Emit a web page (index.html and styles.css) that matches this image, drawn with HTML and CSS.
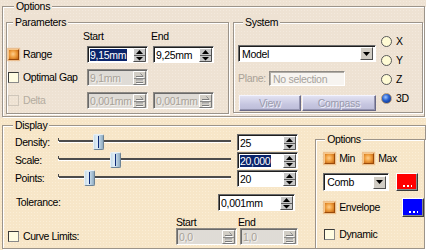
FILE: index.html
```html
<!DOCTYPE html>
<html>
<head>
<meta charset="utf-8">
<link rel="stylesheet" href="styles.css">
</head>
<body>
<svg class="defs" width="0" height="0" aria-hidden="true">
  <defs>
    <symbol id="spin-on" viewBox="0 0 13 14">
      <rect width="13" height="14" fill="#c6c6c6"/>
      <path d="M0.5 13.5V0.5H12.5" stroke="#fff" fill="none"/>
      <path d="M12.5 0.5V13.5H0.5" stroke="#505050" fill="none"/>
      <path d="M1 7.5H12" stroke="#606060"/>
      <path d="M6.5 2L10 6H3z" fill="#000"/>
      <path d="M3 9H10L6.5 12.5z" fill="#000"/>
    </symbol>
    <symbol id="spin-off" viewBox="0 0 13 14">
      <rect width="13" height="14" fill="#d2cec6"/>
      <path d="M0.5 13.5V0.5H12.5" stroke="#fff" fill="none"/>
      <path d="M12.5 0.5V13.5H0.5" stroke="#7a7a7a" fill="none"/>
      <path d="M1 7.5H12" stroke="#8a8a8a"/>
      <path d="M3.5 6.5H10.5L8 3.5" stroke="#fff" fill="none"/>
      <path d="M3 5.5H10L7.5 2.5" stroke="#7c7c7c" fill="none"/>
      <path d="M3.5 9.5H10.5M3.5 12.5H10.5" stroke="#fff" fill="none"/>
      <path d="M3 9H10M3 11.5H10" stroke="#7c7c7c" fill="none"/>
    </symbol>
  </defs>
</svg>

<div class="top">
  <fieldset class="grp outer">
    <legend>Options</legend>
    <div class="top-row">
      <fieldset class="grp params">
        <legend>Parameters</legend>
        <div class="phead"><span class="h-start">Start</span><span>End</span></div>
        <div class="prow first">
          <label class="chk"><span class="box on"></span>Range</label>
          <span class="spin"><span class="val"><span class="sel">9,15mm</span></span><svg class="arr"><use href="#spin-on"/></svg></span>
          <span class="spin gap"><span class="val">9,25mm</span><svg class="arr"><use href="#spin-on"/></svg></span>
        </div>
        <div class="prow">
          <label class="chk"><span class="box"></span>Optimal Gap</label>
          <span class="spin dis"><span class="val">9,1mm</span><svg class="arr"><use href="#spin-off"/></svg></span>
        </div>
        <div class="prow">
          <label class="chk dis"><span class="box dis"></span>Delta</label>
          <span class="spin dis"><span class="val">0,001mm</span><svg class="arr"><use href="#spin-off"/></svg></span>
          <span class="spin dis gap"><span class="val">0,001mm</span><svg class="arr"><use href="#spin-off"/></svg></span>
        </div>
      </fieldset>
      <fieldset class="grp system">
        <legend>System</legend>
        <div class="sys">
          <div class="sys-left">
            <div class="combo wide"><span class="cval">Model</span><span class="dd"><svg width="7" height="4" viewBox="0 0 7 4"><path d="M0 0H7L3.5 4z" fill="#000"/></svg></span></div>
            <div class="plane"><span class="plabel">Plane:</span><span class="pfield">No selection</span></div>
            <div class="btns"><span class="btn view">View</span><span class="btn compass">Compass</span></div>
          </div>
          <div class="radios">
            <label class="radio"><span class="rad"></span>X</label>
            <label class="radio"><span class="rad"></span>Y</label>
            <label class="radio"><span class="rad"></span>Z</label>
            <label class="radio"><span class="rad on"></span>3D</label>
          </div>
        </div>
      </fieldset>
    </div>
  </fieldset>
</div>

<div class="bottom">
  <fieldset class="grp display">
    <legend>Display</legend>
    <div class="disp">
      <div class="disp-left">
        <div class="srow first">
          <span class="slabel">Density:</span>
          <span class="slider"><span class="track"></span><span class="thumb" style="left:35px"></span></span>
          <span class="spin"><span class="val">25</span><svg class="arr"><use href="#spin-on"/></svg></span>
        </div>
        <div class="srow">
          <span class="slabel">Scale:</span>
          <span class="slider"><span class="track"></span><span class="thumb" style="left:52px"></span></span>
          <span class="spin"><span class="val"><span class="sel">20,000</span></span><svg class="arr"><use href="#spin-on"/></svg></span>
        </div>
        <div class="srow">
          <span class="slabel">Points:</span>
          <span class="slider"><span class="track"></span><span class="thumb" style="left:26px"></span></span>
          <span class="spin"><span class="val">20</span><svg class="arr"><use href="#spin-on"/></svg></span>
        </div>
        <div class="trow">
          <span class="tlabel">Tolerance:</span>
          <span class="spin tol"><span class="val">0,001mm</span><svg class="arr"><use href="#spin-on"/></svg></span>
        </div>
        <div class="chead"><span class="h-cstart">Start</span><span>End</span></div>
        <div class="crow">
          <label class="chk clim"><span class="box"></span>Curve Limits:</label>
          <span class="spin dis"><span class="val">0,0</span><svg class="arr"><use href="#spin-off"/></svg></span>
          <span class="spin dis cend"><span class="val">1,0</span><svg class="arr"><use href="#spin-off"/></svg></span>
        </div>
      </div>
      <fieldset class="grp opts">
        <legend>Options</legend>
        <div class="orow r1">
          <label class="chk omin"><span class="box on"></span>Min</label>
          <label class="chk"><span class="box on"></span>Max</label>
        </div>
        <div class="orow r2">
          <div class="combo small"><span class="cval">Comb</span><span class="dd"><svg width="7" height="4" viewBox="0 0 7 4"><path d="M0 0H7L3.5 4z" fill="#000"/></svg></span></div>
          <span class="swatch red"><span class="dots"></span></span>
        </div>
        <div class="orow r3">
          <label class="chk oenv"><span class="box on"></span>Envelope</label>
          <span class="swatch blue"><span class="dots"></span></span>
        </div>
        <div class="orow r4">
          <label class="chk"><span class="box"></span>Dynamic</label>
        </div>
      </fieldset>
    </div>
  </fieldset>
</div>
</body>
</html>
```

FILE: styles.css
```css
* { box-sizing: border-box; }
html, body { margin: 0; padding: 0; }
body {
  width: 426px;
  height: 250px;
  overflow: hidden;
  font-family: "Liberation Sans", Arial, sans-serif;
  font-size: 10.5px;
  letter-spacing: -0.3px;
  line-height: 13px;
  color: #000;
}
.defs { position: absolute; width: 0; height: 0; }

/* panels */
.top {
  height: 118px;
  background-color: #eee2d3;
  background-image: radial-gradient(circle, #f3e9dd 0.6px, transparent 0.9px);
  background-size: 3px 3px;
  padding: 0 0 0 2px;
}
.bottom {
  height: 132px;
  background-color: #f7e6c8;
  background-image: radial-gradient(circle, #fbeed6 0.6px, transparent 0.9px);
  background-size: 3px 3px;
  padding: 1px 0 0 2px;
}

/* etched group frames */
.grp {
  margin: 0;
  min-width: 0;
  border: 1px solid #9c948a;
  box-shadow: inset 1px 1px 0 #fff, 1px 1px 0 #fff;
}
.grp > legend {
  padding: 0 2px;
  height: 13px;
  line-height: 13px;
}
.top .grp > legend { background: #eee2d3; }
.bottom .grp > legend { background: #f7e6c8; }

.outer {
  width: 423px;
  height: 117px;
  padding: 3px 0 0 3px;
}
.outer > legend { margin-left: 8px; }
.top-row { display: flex; gap: 4px; }

/* parameters */
.params {
  width: 223px;
  height: 98px;
  padding: 1px 0 0 1px;
}
.params > legend { margin-left: 5px; }
.phead { display: flex; height: 14px; padding-left: 75px; }
.h-start { width: 68px; }
.prow { display: flex; align-items: center; height: 17px; margin-top: 6px; }
.prow.first { margin-top: 2px; }
.chk { display: flex; align-items: center; gap: 4px; white-space: nowrap; letter-spacing: -0.4px; }
.prow .chk { width: 79px; }
.chk.dis { color: #b4aca0; }
.spin.gap { margin-left: 5px; }

/* checkbox */
.box {
  flex: none;
  width: 11px;
  height: 11px;
  border: 1px solid;
  border-color: #3a3a3a #8a8a8a #8a8a8a #3a3a3a;
  background: #fffce2;
}
.box.on {
  border: 1px solid;
  border-color: #f6c68a #9a4a0a #9a4a0a #f6c68a;
  background: radial-gradient(circle at 45% 45%, #ffcf8e 0, #f0a040 45%, #c2620e 100%);
  box-shadow: 0 0 1px 1px rgba(232, 160, 90, 0.55);
}
.box.dis {
  border-color: #cfc6ba;
  background: transparent;
}

/* spin inputs */
.spin {
  flex: none;
  display: flex;
  align-items: center;
  width: 61px;
  height: 17px;
  border: 1px solid;
  border-color: #6c6c6c #fff #fff #6c6c6c;
  box-shadow: inset 1px 1px 0 #1e1e1e;
  background: #fff;
  padding: 1px 1px 0 2px;
}
.spin .val { flex: 1; white-space: nowrap; overflow: hidden; line-height: 13px; }
.spin .arr { flex: none; width: 13px; height: 14px; margin-top: -1px; }
.sel { background: #0a246a; color: #fff; padding-right: 1px; }
.spin.dis {
  background-color: #d8d5cf;
  background-image: radial-gradient(circle, #e6e3de 0.6px, transparent 0.8px);
  background-size: 2px 2px;
  color: #a8a298;
  text-shadow: 1px 1px 0 #f4f2ee;
  border-color: #8e8a84 #fff #fff #8e8a84;
  box-shadow: inset 1px 1px 0 #6a6a6a;
}

/* system */
.system {
  width: 190px;
  height: 97px;
  padding: 1px 0 0 4px;
}
.system > legend { margin-left: 5px; }
.sys { display: flex; }
.sys-left { width: 138px; padding-top: 15px; }
.combo {
  display: flex;
  align-items: center;
  height: 17px;
  border: 1px solid;
  border-color: #6c6c6c #fff #fff #6c6c6c;
  box-shadow: inset 1px 1px 0 #1e1e1e;
  background: #fff;
  padding: 1px 2px 0 3px;
}
.combo .cval { flex: 1; }
.dd {
  width: 13px;
  height: 13px;
  margin-top: -1px;
  display: flex;
  align-items: center;
  justify-content: center;
  background: #d0ccc4;
  border: 1px solid;
  border-color: #fff #505050 #505050 #fff;
}
.combo.small { width: 66px; height: 18px; }
.plane { display: flex; align-items: center; height: 15px; margin-top: 9px; }
.plabel { width: 31px; color: #a9a197; }
.pfield {
  width: 76px;
  height: 15px;
  line-height: 12px;
  padding: 1px 0 0 3px;
  color: #a6a29c;
  background: #f7f4f0;
  border: 1px solid;
  border-color: #8e8a84 #fff #fff #8e8a84;
  box-shadow: inset 1px 1px 0 #b0aca6;
}
.btns { display: flex; margin-top: 9px; gap: 1px; padding-left: 1px; }
.btn {
  height: 16px;
  display: flex;
  align-items: center;
  justify-content: center;
  background: linear-gradient(#e2e2f2, #c6c6e0 60%, #bcbcd8);
  border: 1px solid;
  border-color: #f4f4ff #6a6a86 #6a6a86 #f4f4ff;
  box-shadow: inset -1px -1px 0 #9494b0;
  color: #9a9aac;
  text-shadow: 1px 1px 0 #f0f0fa;
}
.btn.view { width: 62px; }
.btn.compass { width: 75px; }

.radios { margin-left: 5px; padding-top: 6px; }
.radio { display: flex; align-items: center; height: 11px; margin-bottom: 8px; gap: 4px; }
.rad {
  flex: none;
  width: 11px;
  height: 11px;
  border-radius: 50%;
  border: 1px solid #5a5a5a;
  background: #fffbd4;
}
.rad.on {
  border-color: #b49a78;
  background: radial-gradient(circle at 40% 35%, #9cc4ff 0, #2a64d2 40%, #06206a 100%);
}

/* display */
.display {
  width: 424px;
  height: 130px;
  padding: 0 0 0 5px;
}
.display > legend { margin-left: 5px; }
.disp { display: flex; letter-spacing: -0.4px; }
.disp .spin, .disp .combo { letter-spacing: -0.3px; }
.disp-left { width: 305px; }
.srow { display: flex; align-items: center; height: 17px; margin-top: 1px; }
.srow.first { margin-top: 2px; }
.slabel { width: 50px; padding-left: 7px; }
.slider { position: relative; width: 173px; height: 17px; margin-right: 6px; }
.track {
  position: absolute;
  left: 0;
  right: 0;
  top: 6px;
  height: 3px;
  background: #4c4c4c;
  border-bottom: 1px solid #fff;
  border-left: 1px solid #fff;
}
.track::before {
  content: "";
  position: absolute;
  left: -1px;
  top: -2px;
  width: 1px;
  height: 3px;
  background: #4c4c4c;
}
.thumb {
  position: absolute;
  top: 0;
  width: 11px;
  height: 16px;
  border: 1px solid;
  border-color: #e8f0f6 #6c8294 #6c8294 #e8f0f6;
  border-radius: 2px;
  background: linear-gradient(90deg, #c6dbe8, #e4eff6 35%, #b2cadc 70%, #8eaac0);
}
.thumb::after {
  content: "";
  position: absolute;
  left: 4px;
  top: 1px;
  width: 1px;
  height: 12px;
  background: #0e2c78;
}
.trow { display: flex; align-items: center; height: 17px; margin-top: 7px; }
.tlabel { width: 210px; padding-left: 8px; }
.spin.tol { width: 77px; }
.chead { display: flex; height: 11px; line-height: 11px; margin-top: 6px; padding-left: 168px; color: #000; }
.h-cstart { width: 62px; }
.crow { display: flex; align-items: center; height: 17px; }
.chk.clim { width: 168px; }
.spin.cend { width: 58px; margin-left: 3px; }

/* inner options group */
.opts {
  width: 110px;
  height: 116px;
  margin-top: 1px;
  margin-left: 3px;
  padding: 0 0 0 7px;
}
.opts > legend { margin-left: 2px; }
.orow { display: flex; align-items: center; }
.r1 { height: 11px; margin-top: 7px; padding-left: 1px; }
.chk.omin { width: 39px; }
.r2 { height: 20px; margin-top: 8px; }
.r3 { height: 19px; margin-top: 6px; padding-left: 1px; }
.chk.oenv { width: 71px; }
.r4 { height: 11px; margin-top: 12px; padding-left: 1px; }
.swatch {
  display: flex;
  align-items: flex-end;
  justify-content: center;
  width: 22px;
  height: 18px;
  margin-left: 7px;
  padding-bottom: 3px;
  border: 1px solid;
  border-color: #fff #3a3a3a #3a3a3a #fff;
  box-shadow: inset -1px -1px 0 #8a8a8a;
}
.swatch.red { background: #ff0000; }
.swatch.blue { background: #0000ff; height: 19px; }
.dots {
  width: 9px;
  height: 2px;
  background: repeating-linear-gradient(90deg, #fff 0 2px, transparent 2px 4px);
}
```
